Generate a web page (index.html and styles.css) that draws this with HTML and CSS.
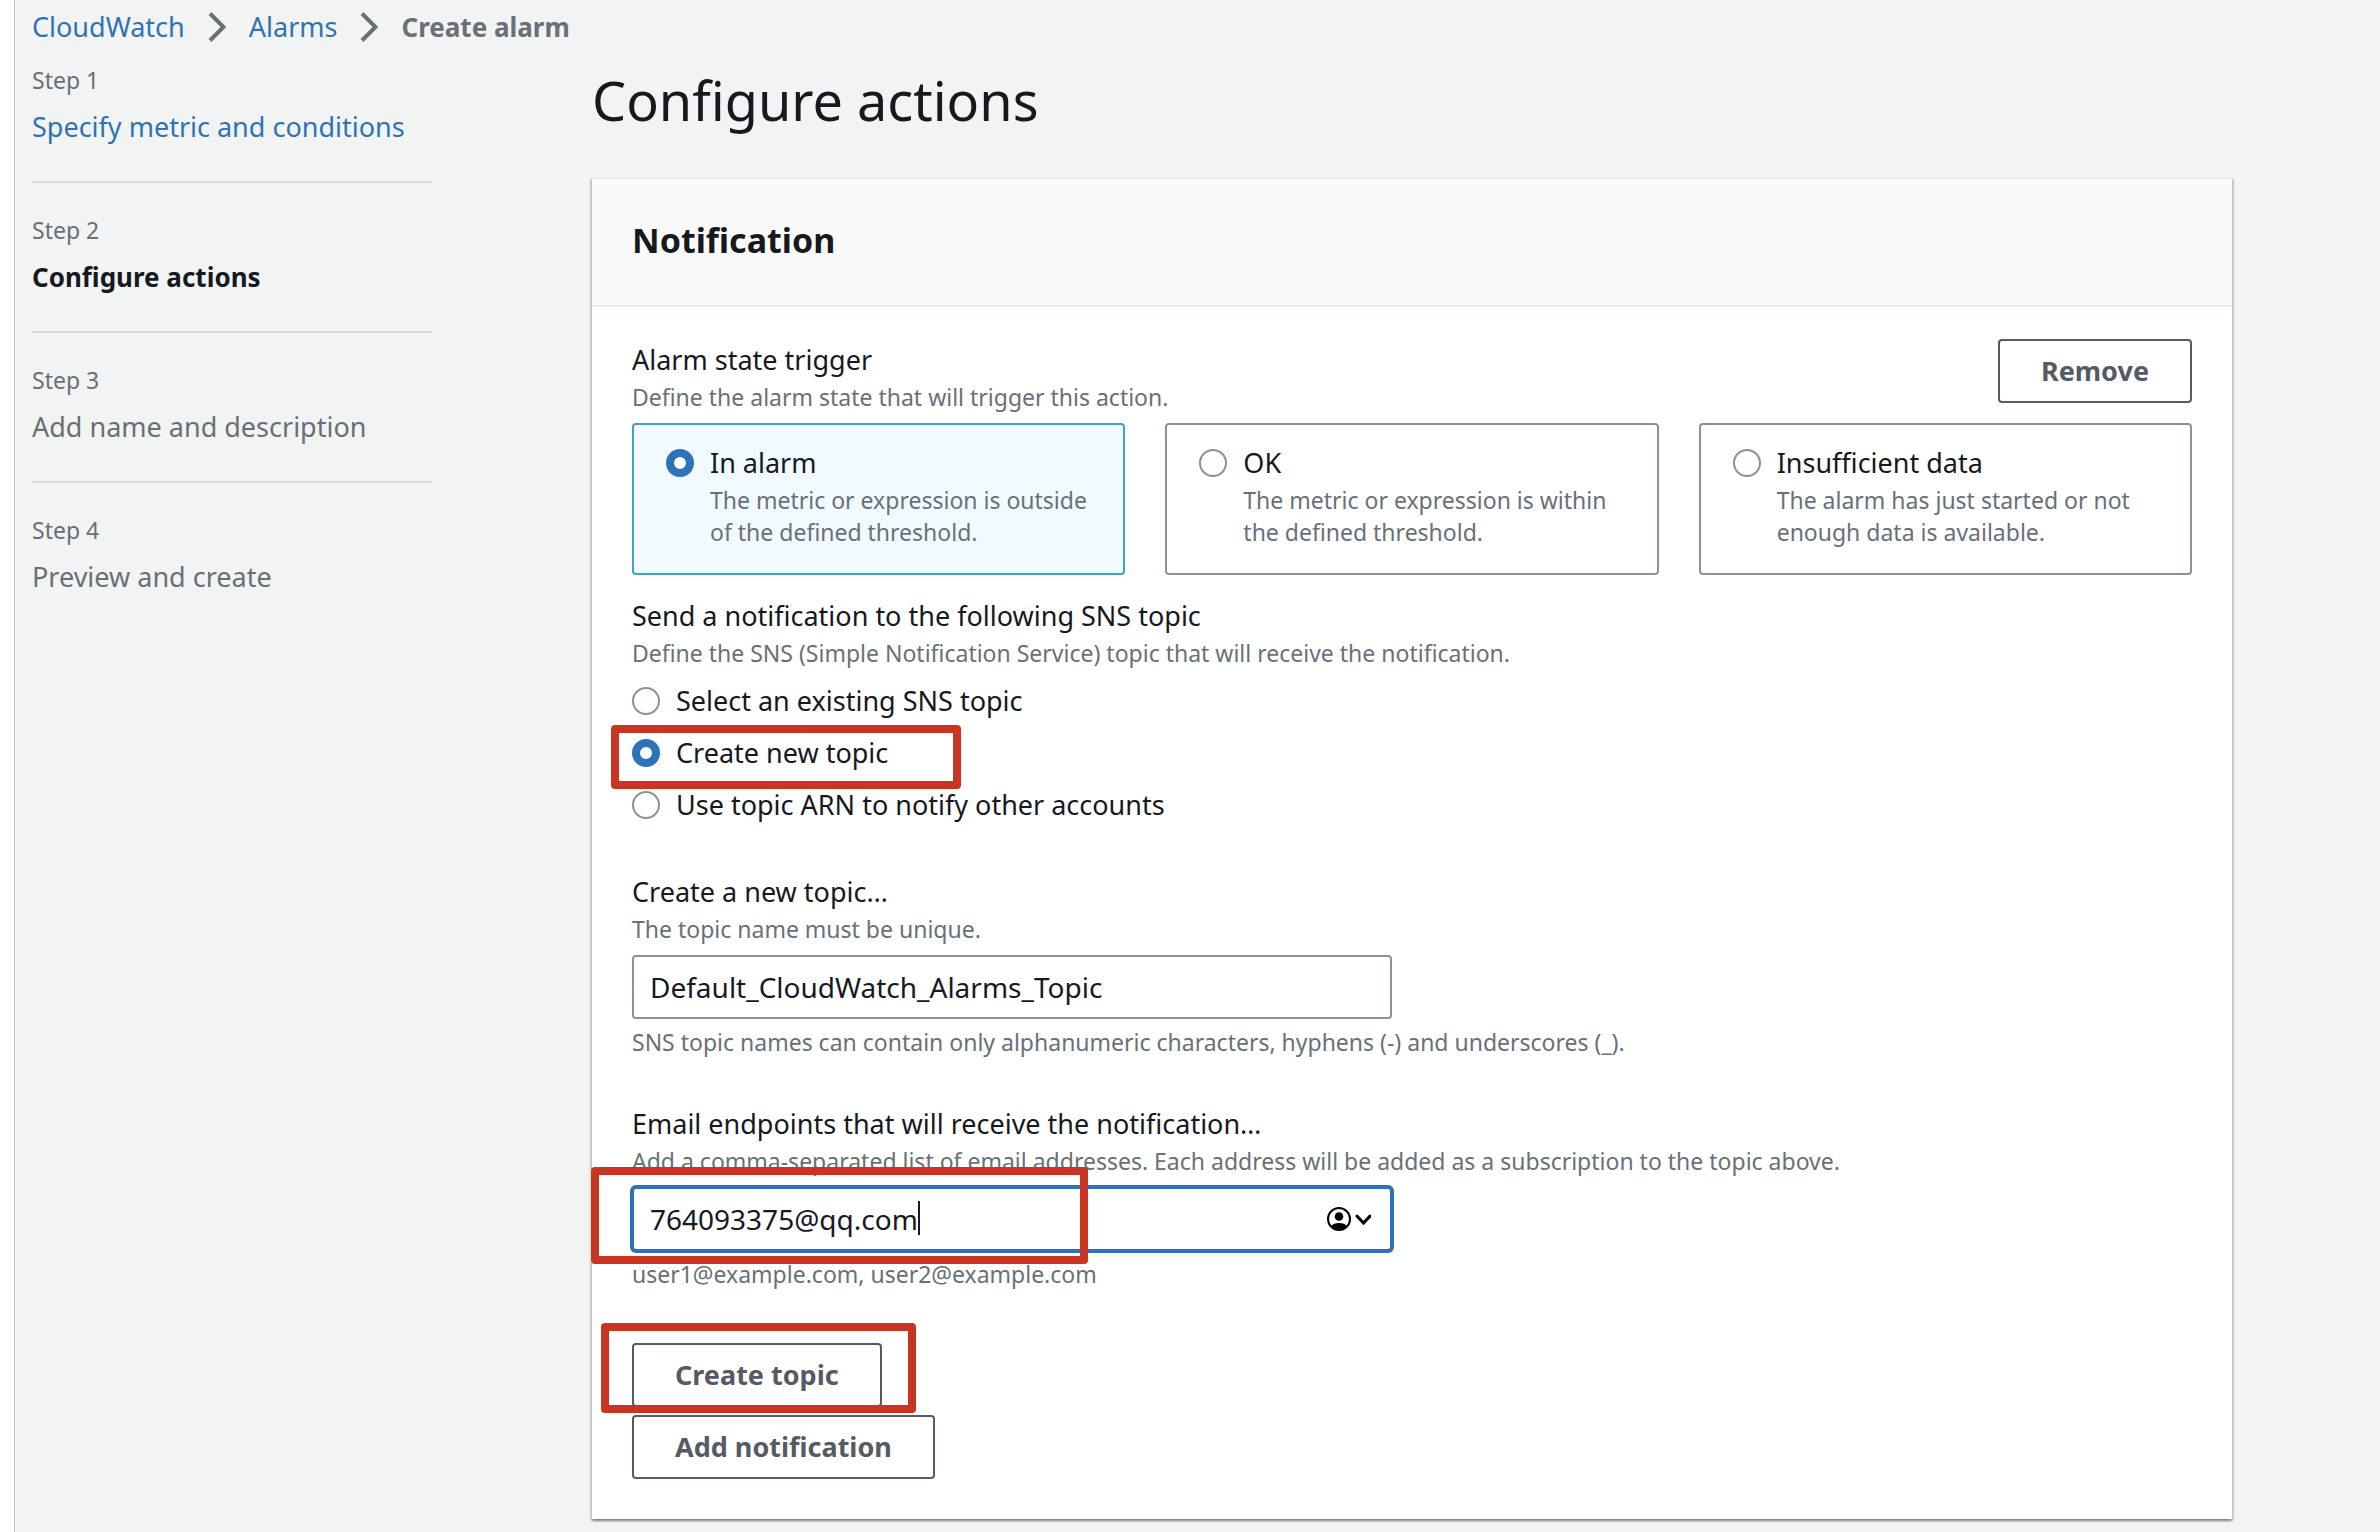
FILE: index.html
```html
<!DOCTYPE html>
<html lang="en">
<head>
<meta charset="utf-8">
<title>Create alarm - CloudWatch</title>
<link rel="stylesheet" href="styles.css">
</head>
<body>
<div class="page">
  <nav class="breadcrumbs" aria-label="Breadcrumbs">
    <a href="#">CloudWatch</a>
    <svg class="crumb-sep" viewBox="0 0 18 32" aria-hidden="true"><path d="M2 2.500 15.500 16 2 29.500"/></svg>
    <a href="#">Alarms</a>
    <svg class="crumb-sep" viewBox="0 0 18 32" aria-hidden="true"><path d="M2 2.500 15.500 16 2 29.500"/></svg>
    <span class="crumb-current">Create alarm</span>
  </nav>

  <div class="wizard">
    <ol class="steps">
      <li class="step"><span class="step-label">Step 1</span><a class="step-title" href="#">Specify metric and conditions</a></li>
      <li class="step"><span class="step-label">Step 2</span><span class="step-title step-title-active">Configure actions</span></li>
      <li class="step"><span class="step-label">Step 3</span><span class="step-title">Add name and description</span></li>
      <li class="step"><span class="step-label">Step 4</span><span class="step-title">Preview and create</span></li>
    </ol>

    <main class="content">
      <h1 class="title">Configure actions</h1>

      <section class="card">
        <header class="card-header"><h2 class="card-title">Notification</h2></header>
        <form class="card-body">
          <div class="trigger-row">
            <div>
              <div class="label" id="trigger-label">Alarm state trigger</div>
              <div class="hint">Define the alarm state that will trigger this action.</div>
            </div>
            <button class="button" type="button">Remove</button>
          </div>

          <div class="tiles" role="radiogroup" aria-labelledby="trigger-label">
            <label class="tile tile-selected">
              <input class="radio" type="radio" name="state" checked>
              <span class="tile-text"><span class="label">In alarm</span><span class="hint">The metric or expression is outside of the defined threshold.</span></span>
            </label>
            <label class="tile">
              <input class="radio" type="radio" name="state">
              <span class="tile-text"><span class="label">OK</span><span class="hint">The metric or expression is within the defined threshold.</span></span>
            </label>
            <label class="tile">
              <input class="radio" type="radio" name="state">
              <span class="tile-text"><span class="label">Insufficient data</span><span class="hint">The alarm has just started or not enough data is available.</span></span>
            </label>
          </div>

          <div class="label" id="topic-label">Send a notification to the following SNS topic</div>
          <div class="hint">Define the SNS (Simple Notification Service) topic that will receive the notification.</div>
          <div class="options" role="radiogroup" aria-labelledby="topic-label">
            <label class="option"><input class="radio" type="radio" name="topic"><span>Select an existing SNS topic</span></label>
            <label class="option"><input class="radio" type="radio" name="topic" checked><span>Create new topic</span><span class="mark mark-option"></span></label>
            <label class="option"><input class="radio" type="radio" name="topic"><span>Use topic ARN to notify other accounts</span></label>
          </div>

          <div class="field">
            <label class="label" for="topic-name">Create a new topic…</label>
            <div class="hint">The topic name must be unique.</div>
            <div class="control"><input class="input" id="topic-name" type="text" value="Default_CloudWatch_Alarms_Topic"></div>
            <div class="hint">SNS topic names can contain only alphanumeric characters, hyphens (-) and underscores (_).</div>
          </div>

          <div class="field">
            <label class="label" for="emails">Email endpoints that will receive the notification…</label>
            <div class="hint">Add a comma-separated list of email addresses. Each address will be added as a subscription to the topic above.</div>
            <div class="control">
              <input class="input input-focused" id="emails" type="text" value="764093375@qq.com">
              <span class="caret"></span>
              <svg class="autofill" viewBox="0 0 44 24" aria-hidden="true">
                <circle class="autofill-line" cx="12" cy="12" r="11"/>
                <circle cx="12" cy="9.500" r="4.300"/>
                <path d="M4.200 19.500C5.500 16.800 8.500 16 12 16s6.500.8 7.800 3.500C18 22 15 23.200 12 23.200S6 22 4.200 19.500Z"/>
                <path class="autofill-line autofill-chevron" d="M30 9l6.500 7L43 9"/>
              </svg>
              <span class="mark mark-input"></span>
            </div>
            <div class="hint">user1@example.com, user2@example.com</div>
          </div>

          <div class="actions">
            <div class="action"><button class="button" type="button">Create topic</button><span class="mark mark-button"></span></div>
            <button class="button" type="button">Add notification</button>
          </div>
        </form>
      </section>
    </main>
  </div>
</div>
</body>
</html>
```
FILE: styles.css
```css
* { box-sizing: border-box; }

body {
  margin: 0;
  background: #fff;
  color: #16191f;
  font: 27px/42px "Noto Sans", "Open Sans", sans-serif;
}

a { color: #2e73b8; text-decoration: none; }

.page {
  min-height: 100vh;
  margin-left: 14px;
  padding: 6px 148px 13px 17px;
  border-left: 1px solid #c2c6c6;
  background: #f2f4f3;
}

.breadcrumbs { display: flex; align-items: center; gap: 23px; }
.crumb-sep { width: 18px; height: 32px; fill: none; stroke: #687078; stroke-width: 4; }
.crumb-current { color: #687078; font-weight: 700; font-size: 26px; }

.wizard {
  display: grid;
  grid-template-columns: 400px minmax(0, 1fr);
  column-gap: 160px;
  margin-top: 14px;
}

.steps { margin: 0; padding: 0; list-style: none; color: #687078; }
.step { display: flex; flex-direction: column; gap: 7px; }
.step + .step { margin-top: 32px; padding-top: 29px; border-top: 2px solid #d5dbdb; }
.step-label { font-size: 23px; line-height: 36px; }
.step-title { line-height: 44px; }
.step-title-active { color: #16191f; font-weight: 700; font-size: 26px; }

.title { margin: 5px 0 44px; font-size: 54px; line-height: 66px; font-weight: 400; }

.card {
  background: #fff;
  border-top: 2px solid #eaeded;
  box-shadow: 0 2px 2px rgba(0, 28, 36, .3), 2px 2px 2px rgba(0, 28, 36, .15), -2px 2px 2px rgba(0, 28, 36, .15);
}
.card-header { padding: 38px 40px 42px; border-bottom: 2px solid #eaeded; background: #fafafa; }
.card-title { margin: 0; font-size: 34px; line-height: 46px; font-weight: 700; }
.card-body { padding: 32px 40px 40px; }

.label { display: block; }
.hint { display: block; color: #687078; font-size: 23px; line-height: 32px; }

.trigger-row { display: flex; justify-content: space-between; align-items: flex-start; }

.button {
  height: 64px;
  padding: 0 41px;
  border: 2px solid #545b64;
  border-radius: 4px;
  background: #fff;
  color: #545b64;
  font: inherit;
  font-weight: 700;
}

.radio {
  appearance: none;
  flex: none;
  width: 28px;
  height: 28px;
  margin: 7px 0;
  border: 2px solid #879596;
  border-radius: 50%;
  background: #fff;
}
.radio:checked { border: 8px solid #2e73b8; }

.tiles { display: grid; grid-template-columns: repeat(3, 1fr); gap: 40px; margin: 10px 0 20px; }
.tile {
  display: flex;
  gap: 16px;
  padding: 17px 32px 25px;
  border: 2px solid #879596;
  border-radius: 4px;
}
.tile-selected { border-color: #44a0c9; background: #f1faff; }

.options { display: grid; justify-items: start; gap: 10px; margin-top: 11px; }
.option { position: relative; display: flex; gap: 16px; }

.field { margin-top: 45px; }
.control { position: relative; width: 760px; margin: 10px 0 7px; }
.input {
  display: block;
  width: 100%;
  height: 64px;
  padding: 0 16px;
  border: 2px solid #879596;
  border-radius: 4px;
  background: #fff;
  color: inherit;
  font: inherit;
  font-size: 28px;
}
.input-focused { border-color: #2e73b8; box-shadow: 0 0 0 2px #2e73b8; outline: none; }
.caret { position: absolute; left: 286px; top: 14px; width: 2px; height: 34px; background: #16191f; }
.autofill { position: absolute; right: 21px; top: 20px; width: 44px; height: 24px; fill: #000; }
.autofill-line { fill: none; stroke: #000; stroke-width: 2; }
.autofill-chevron { stroke-width: 3; stroke-linecap: round; }

.actions { display: flex; flex-direction: column; align-items: flex-start; gap: 8px; margin-top: 53px; }
.action { position: relative; display: flex; }

/* Tutorial highlights drawn over the form */
.mark { position: absolute; border: 8px solid #c93423; border-radius: 4px; pointer-events: none; }
.mark-option { left: -21px; top: -7px; width: 350px; height: 64px; }
.mark-input { left: -41px; top: -20px; width: 497px; height: 97px; }
.mark-button { left: -31px; top: -20px; width: 315px; height: 90px; }
```
